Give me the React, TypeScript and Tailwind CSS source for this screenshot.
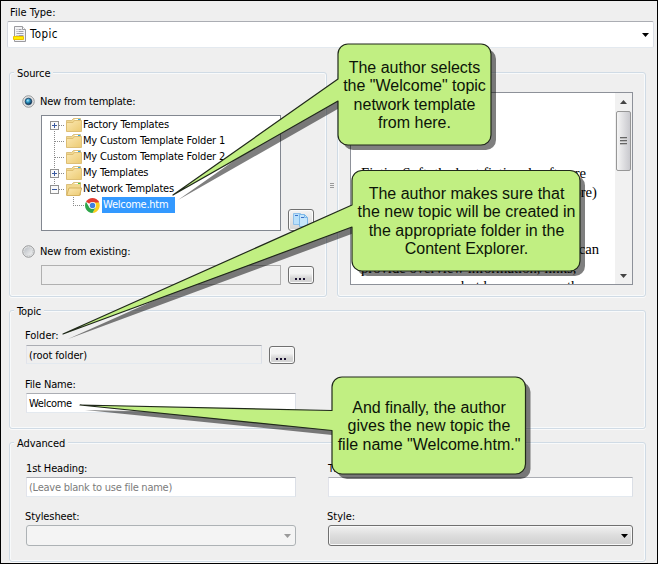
import type { ReactNode } from 'react';

const ui = "font-['DejaVu_Sans_Condensed','DejaVu_Sans',sans-serif]";

function Group({ title, className = '', children }: { title?: string; className?: string; children?: ReactNode }) {
  return (
    <section className={`flex flex-col rounded-[3px] border border-[#d0dbe5] shadow-[inset_0_0_0_1px_#f8fafb,0_1px_0_#fafafa] ${className}`}>
      <div className="-mt-2 h-4 shrink-0 pl-[4px]">
        {title && <span className="block w-fit bg-[#efefef] px-[3px] leading-[18px]">{title}</span>}
      </div>
      {children}
    </section>
  );
}

function Field({ className = '', children }: { className?: string; children?: ReactNode }) {
  return (
    <div className={`flex items-center border border-t-[#abadb3] border-r-[#dbdfe6] border-b-[#e3e9ef] border-l-[#e2e3ea] px-[2px] pt-[2px] ${className}`}>
      {children}
    </div>
  );
}

function Radio({ checked }: { checked?: boolean }) {
  return (
    <svg className="h-[13px] w-[13px] shrink-0" viewBox="0 0 13 13">
      <defs>
        <radialGradient id="dot" cx="40%" cy="35%" r="65%">
          <stop offset="0" stopColor="#b5ecfa" />
          <stop offset=".4" stopColor="#2f9bc9" />
          <stop offset="1" stopColor="#0b2c4c" />
        </radialGradient>
        <linearGradient id="well" x1="0" y1="0" x2="1" y2="1">
          <stop offset="0" stopColor="#b9bec4" />
          <stop offset="1" stopColor="#f4f4f4" />
        </linearGradient>
      </defs>
      <circle cx="6.5" cy="6.5" r="5.7" fill="#f6f6f6" stroke="#8b8d8f" />
      <circle cx="6.5" cy="6.5" r="4.1" fill="url(#well)" stroke="#c3c7ca" strokeWidth=".7" />
      {checked && <circle cx="6.5" cy="6.5" r="3.3" fill="url(#dot)" stroke="#16385a" strokeWidth=".7" />}
    </svg>
  );
}

function Folder({ open }: { open?: boolean }) {
  return (
    <svg className="h-4 w-4 shrink-0" viewBox="0 0 16 16">
      <defs>
        <linearGradient id="fold" x1="0" y1="0" x2="1" y2="1">
          <stop offset="0" stopColor="#fbe8b2" />
          <stop offset="1" stopColor="#ecca72" />
        </linearGradient>
      </defs>
      <path d="M.5 3.500h5l2-2h7v12.500H.5z" fill="#f0d78f" stroke="#cfae60" strokeWidth=".7" />
      <path d="M8.500 2.500h5.500" stroke="#fff" />
      <path d="M12 2.500h2.300" stroke={open ? '#3fc43f' : '#36a9e0'} />
      {open ? (
        <path d="M3 7h12.700l-2.200 7.500H.7z" fill="url(#fold)" stroke="#cfa850" strokeWidth=".8" />
      ) : (
        <path d="M.5 5.500h6.500l1.500-2h7V14.500H.5z" fill="url(#fold)" stroke="#d9b869" strokeWidth=".8" />
      )}
    </svg>
  );
}

function Chrome() {
  return (
    <svg className="h-[15px] w-[15px] shrink-0" viewBox="0 0 16 16">
      <path d="M8 8 1.100 4A8 8 0 0 1 14.900 4z" fill="#e33b2e" />
      <path d="M8 4.500h6.900A8 8 0 0 1 8 16l3-6z" fill="#fbd01f" />
      <path d="M1.100 4A8 8 0 0 0 8 16l3.200-6H4.700z" fill="#2fa64a" />
      <path d="M8 4.300h7" stroke="#e33b2e" strokeWidth=".8" />
      <circle cx="8" cy="8" r="3.700" fill="#fff" />
      <circle cx="8" cy="8" r="2.900" fill="#3f7fe0" />
    </svg>
  );
}

function Branch({ sign, first, last }: { sign?: string; first?: boolean; last?: boolean }) {
  return (
    <svg className="h-4 w-4 shrink-0" viewBox="0 0 16 16" shapeRendering="crispEdges">
      <path d={`M4.500 ${first ? 8 : 0}V${last ? 8 : 16}M4.500 8.500H15`} stroke="#8a8a8a" strokeDasharray="1 1" />
      {sign && (
        <>
          <rect x=".5" y="4.500" width="8" height="8" fill="#fafafa" stroke="#919191" />
          <path d={sign === '+' ? 'M2 8.500h5M4.500 6v5' : 'M2 8.500h5'} stroke="#3a5aa0" />
        </>
      )}
    </svg>
  );
}

function TreeRow({ label, tracking, ...b }: { label: string; tracking: string; sign?: string; first?: boolean; last?: boolean }) {
  return (
    <div className="flex h-4 items-center">
      <Branch {...b} />
      <Folder open={b.last} />
      <span className={`ml-px ${tracking}`}>{label}</span>
    </div>
  );
}

function DotsButton() {
  return (
    <div className="flex h-[18px] w-[26px] shrink-0 items-end justify-center gap-[2px] rounded-[3px] border border-[#707070] bg-linear-to-b from-[#f3f3f3] from-40% to-[#d4d4d4] to-70% pr-[3px] pb-[3px] shadow-[inset_0_0_0_1px_#fbfbfb]">
      <i className="size-[2px] bg-[#1a1030]" />
      <i className="size-[2px] bg-[#1a1030]" />
      <i className="size-[2px] bg-[#1a1030]" />
    </div>
  );
}

function Arrow({ className }: { className: string }) {
  return (
    <svg className={className} width="7" height="4" viewBox="0 0 7 4">
      <path d="M0 0h7L3.500 4z" fill="currentColor" />
    </svg>
  );
}

const callouts = [
  'M348 44H481A10 10 0 0 1 491 54V135A10 10 0 0 1 481 145H348A10 10 0 0 1 338 135V101L173 195L338 79V54A10 10 0 0 1 348 44Z',
  'M362 170.500H570A10 10 0 0 1 580 180.500V261A10 10 0 0 1 570 271H362A10 10 0 0 1 352 261V227L63 334L352 205V180.500A10 10 0 0 1 362 170.500Z',
  'M342 377H515.500A10 10 0 0 1 525.500 387V464A10 10 0 0 1 515.500 474H342A10 10 0 0 1 332 464V430.500L80 405L332 410.500V387A10 10 0 0 1 342 377Z',
];

function CalloutText({ className, lines }: { className: string; lines: string[] }) {
  return (
    <div className={`absolute flex flex-col items-center text-[16px] leading-[18.300px] tracking-normal whitespace-pre text-[#0c1408] font-['Liberation_Sans',Arial,sans-serif] ${className}`}>
      {lines.map((t) => (
        <span key={t}>{t}</span>
      ))}
    </div>
  );
}

export default function App() {
  return (
    <div className={`relative flex h-[564px] w-[658px] flex-col overflow-hidden border border-black bg-[#efefef] text-[11px] leading-[14px] tracking-[-0.1px] whitespace-pre text-black ${ui}`}>
      <div className="mt-[4px] ml-[9px] h-4 leading-4 tracking-normal">File Type:</div>
      <div className="ml-[6px] flex h-[27px] w-[647px] shrink-0 items-center rounded-[2px] border border-t-[#abadb3] border-r-[#dbdfe6] border-b-[#e3e9ef] border-l-[#d5d8e0] bg-white pr-[4px] pl-[5px]">
        <svg className="mb-px h-4 w-[14px]" viewBox="0 0 14 16">
          <path d="M1.500.5h8l3 3v12h-11z" fill="#f3f3f5" stroke="#9a9a9e" />
          <path d="M9.500.5v3h3" fill="#fff" stroke="#9a9a9e" />
          <path d="M3.500 3.500h1m1 0h3M3.500 5.500h1m1 0h5M3.500 7.500h7M3.500 9.500h1m1 0h5" stroke="#8c8c96" strokeWidth=".8" />
          <path d="M.5 10.500h10v3H.5z" fill="#ffee00" stroke="#eec000" />
        </svg>
        <span className="mb-[2px] ml-[3px] flex-1 text-[11.500px] tracking-[0.4px]">Topic</span>
        <Arrow className="text-black" />
      </div>

      <div className="mt-[24px] ml-[8px] flex h-[225px] shrink-0">
        <Group title="Source" className="w-[318px]">
          <div className="mt-[13px] ml-[12px] flex h-[14px] items-center gap-[5px]">
            <Radio checked />
            <span className="leading-[16px] pt-px tracking-[-0.200px]">New from template:</span>
          </div>
          <div className="mt-[7px] ml-[31px] flex items-end gap-[7px]">
            <div className="h-[116px] w-[240px] border border-[#828790] bg-white pt-px pl-[8px]">
              <TreeRow first sign="+" label="Factory Templates" tracking="tracking-[-0.2px]" />
              <TreeRow label="My Custom Template Folder 1" tracking="tracking-[-0.170px]" />
              <TreeRow label="My Custom Template Folder 2" tracking="tracking-[-0.170px]" />
              <TreeRow sign="+" label="My Templates" tracking="tracking-[-0.2px]" />
              <TreeRow last sign="-" label="Network Templates" tracking="tracking-[-0.220px]" />
              <div className="flex h-4 items-center pl-[23px]">
                <svg className="h-4 w-3" viewBox="0 0 12 16" shapeRendering="crispEdges">
                  <path d="M.5 0v8M0 8.500h11" stroke="#8a8a8a" strokeDasharray="1 1" />
                </svg>
                <Chrome />
                <span className="ml-[2px] h-4 w-[73px] bg-[#3399ff] pl-px leading-[15px] tracking-[-0.250px] text-white">Welcome.htm</span>
              </div>
            </div>
            <div className="flex h-[22px] w-[26px] items-center justify-center rounded-[3px] border border-[#707070] bg-linear-to-b from-[#f4f4f4] to-[#d4d4d4] shadow-[inset_0_0_0_1px_#fbfbfb]">
              <svg className="h-4 w-[18px]" viewBox="0 0 18 16">
                <path d="M1.500 1.500h7v11h-7z" fill="#b9e0fb" stroke="#8fc0ea" />
                <path d="M7.500 2.500h5l3 3v9h-8z" fill="#c6e6fb" stroke="#7db8e8" />
                <path d="M3 3.500h3M9 5.500h3" stroke="#3b6fc8" />
                <path d="M12.500 2.500v3h3" fill="none" stroke="#7db8e8" />
              </svg>
            </div>
          </div>
          <div className="mt-[13px] ml-[12px] flex h-[14px] items-center gap-[5px]">
            <Radio />
            <span className="leading-[16px] pt-px tracking-[-0.150px]">New from existing:</span>
          </div>
          <div className="mt-[7px] ml-[31px] flex items-center gap-[7px]">
            <div className="h-5 w-[240px] border border-[#b0b0b0]" />
            <DotsButton />
          </div>
        </Group>
        <div className="flex w-[10px] flex-col items-center justify-center gap-px pt-[2px]">
          <i className="h-px w-1 bg-[#9a9a9a]" />
          <i className="h-px w-1 bg-[#9a9a9a]" />
          <i className="h-px w-1 bg-[#9a9a9a]" />
        </div>
        <Group className="w-[309px]">
          <div className="mt-[11px] ml-[12px] flex h-[193px] w-[283px] border border-[#8d9199] bg-white">
            <div className="w-[264px] overflow-hidden pt-[71px] pl-[10px] text-[14.670px] leading-[18.900px] tracking-normal font-['Liberation_Serif',serif]">
              <div>FictionSoft, the best fictional software</div>
              <div className="w-[236px] text-right">(and more)</div>
              <div>&nbsp;</div>
              <div>&nbsp;</div>
              <div className="w-[238px] text-right">can</div>
              <div>provide overview information, links,</div>
              <div>or even so many but have more on the</div>
            </div>
            <div className="flex w-[17px] flex-col items-center bg-[#f1f1f1]">
              <Arrow className="mt-[7px] rotate-180 text-[#444]" />
              <div className="mt-[7px] flex h-[60px] w-[15px] flex-col items-center justify-center gap-px rounded-[2px] border border-[#979797] bg-linear-to-r from-[#f5f5f5] to-[#c9c9ce]">
                <i className="h-[2px] w-[7px] border-b border-[#bbb] bg-[#666]" />
                <i className="h-[2px] w-[7px] border-b border-[#bbb] bg-[#666]" />
                <i className="h-[2px] w-[7px] border-b border-[#bbb] bg-[#666]" />
              </div>
              <Arrow className="mt-auto mb-[6px] text-[#444]" />
            </div>
          </div>
        </Group>
      </div>

      <Group title="Topic" className="mt-[13px] ml-[8px] h-[119px] w-[637px] shrink-0">
        <div className="mt-[10px] ml-[15px] tracking-normal">Folder:</div>
        <div className="mt-[2px] ml-[16px] flex items-end gap-[7px]">
          <Field className="h-[19px] w-[236px]">(root folder)</Field>
          <DotsButton />
        </div>
        <div className="mt-[14px] ml-[15px] tracking-[-0.150px]">File Name:</div>
        <Field className="mt-px ml-[16px] h-5 w-[270px] bg-white tracking-[-0.350px]">Welcome</Field>
      </Group>

      <Group title="Advanced" className="mt-[13px] ml-[8px] h-[120px] w-[637px] shrink-0">
        <div className="mt-[11px] ml-[15px] grid grid-cols-[270px_305px] gap-x-[32px] pl-px">
          <span className="tracking-[-0.150px]">1st Heading:</span>
          <span>Title:</span>
          <Field className="mt-px h-5 bg-white tracking-[-0.250px] text-[#7c7c7c]">(Leave blank to use file name)</Field>
          <Field className="mt-px h-5 bg-white" />
          <span className="mt-[13px] -ml-px">Stylesheet:</span>
          <span className="mt-[13px] -ml-px tracking-normal">Style:</span>
          <div className="mt-px flex h-[21px] items-center justify-end rounded-[3px] border border-[#adb2b5] bg-[#f4f4f4] pr-[4px]">
            <Arrow className="text-[#9a9a9a]" />
          </div>
          <div className="mt-px flex h-[21px] items-center justify-end rounded-[3px] border border-[#707070] bg-linear-to-b from-[#f1f1f1] via-[#dddddd] via-50% to-[#cfcfcf] pr-[4px] shadow-[inset_0_0_0_1px_#f8f8f8]">
            <Arrow className="text-black" />
          </div>
        </div>
      </Group>

      <svg className="absolute -top-px -left-px h-[564px] w-[658px]" viewBox="0 0 658 564">
        {callouts.map((d) => (
          <g key={d} strokeLinejoin="round">
            <path d={d} transform="translate(5 5)" fill="#000" fillOpacity=".5" />
            <path d={d} fill="#c1ef82" stroke="#20291a" strokeWidth="1.200" />
          </g>
        ))}
      </svg>
      <CalloutText className="top-[58px] left-[337px] w-[153px]" lines={['The author selects', 'the "Welcome" topic', 'network template', 'from here.']} />
      <CalloutText className="top-[184px] left-[351px] w-[229px]" lines={['The author makes sure that', 'the new topic will be created in', 'the appropriate folder in the', 'Content Explorer.']} />
      <CalloutText className="top-[398px] left-[331px] w-[194px]" lines={['And finally, the author', 'gives the new topic the', 'file name "Welcome.htm."']} />
    </div>
  );
}
